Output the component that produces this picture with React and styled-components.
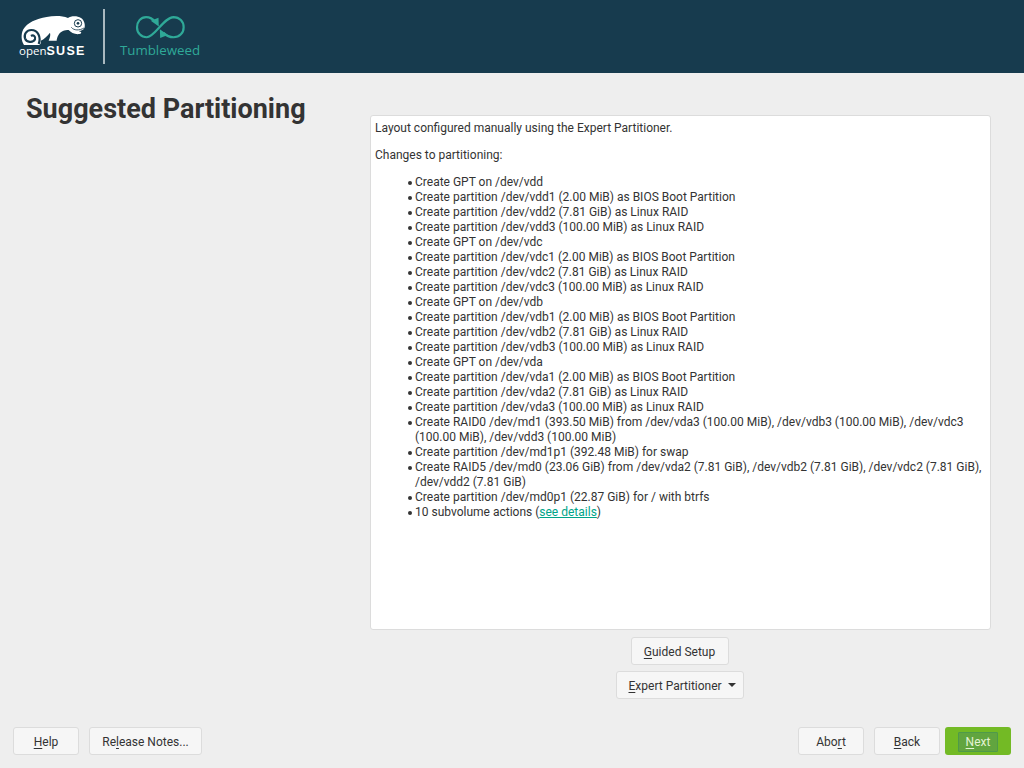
import React from "react";
import styled, { createGlobalStyle } from "styled-components";

const Global = createGlobalStyle`
  html, body { margin: 0; padding: 0; background: #eeeeee; }
  body { font-family: Roboto, "Liberation Sans", sans-serif; font-size: 12px; color: #333; }
`;
const Page = styled.div`
  width: 1024px; height: 768px; display: flex; flex-direction: column; overflow: hidden; background: #eeeeee;
`;
const Header = styled.header`
  height: 73px; background: #173b4e; display: flex; align-items: center; flex: none;
`;
const LogoBlock = styled.div`
  width: 103px; height: 73px; padding: 15px 0 0 18px; box-sizing: border-box; display: flex; flex-direction: column;
`;
const Mascot = styled.svg`
  display: block; width: 70px; height: 30px;
`;
const OpenSuse = styled.div`
  color: #fff; font-family: "Open Sans", sans-serif; font-size: 11.5px; line-height: 11px; margin-left: 1px; white-space: nowrap;
  b { font-family: "Liberation Sans", sans-serif; font-weight: 700; font-size: 12.5px; letter-spacing: 1.3px; }
`;
const Divider = styled.div`
  width: 2px; height: 55px; background: #a9b8bf; flex: none;
`;
const Brand = styled.div`
  align-self: flex-start; padding-top: 15px; margin-left: 14px; width: 82px; display: flex; flex-direction: column; align-items: center;
`;
const Loop = styled.svg`
  display: block; width: 51px; height: 25px;
`;
const BrandName = styled.div`
  color: #2fa998; font-family: "Open Sans", sans-serif; font-size: 13.3px; line-height: 16px; margin-top: 2px; white-space: nowrap;
`;
const Main = styled.main`
  flex: 1; display: flex; min-height: 0;
`;
const Side = styled.div`
  width: 370px; flex: none; padding: 20px 0 0 26px; box-sizing: border-box;
`;
const Title = styled.h1`
  margin: 0; font-size: 27px; line-height: 33px; font-weight: 700; color: #333; white-space: nowrap;
`;
const Content = styled.div`
  width: 621px; padding-top: 42px; display: flex; flex-direction: column; align-items: center;
`;
const Panel = styled.div`
  width: 100%; height: 515px; box-sizing: border-box; background: #fff; border: 1px solid #dcdcdc; border-radius: 3px;
  padding: 5px 4px; line-height: 15px; color: #333;
`;
const Para = styled.p`
  margin: 0 0 12px;
`;
const List = styled.ul`
  margin: 0; padding: 0 0 0 40px; list-style: none;
`;
const Item = styled.li`
  position: relative;
  &::before {
    content: ""; position: absolute; left: -7px; top: 5.5px; width: 4px; height: 4px; border-radius: 50%; background: #333;
  }
`;
const SeeDetails = styled.a`
  color: #00a489; text-decoration: underline;
`;
const Actions = styled.div`
  display: flex; flex-direction: column; align-items: center; gap: 6px; margin-top: 7px; margin-left: -2px;
`;
const Button = styled.button`
  height: 28px; box-sizing: border-box; width: ${p => p.$w}px; padding: 1px 0 0; background: #f6f6f6; border: 1px solid #dcdcdc; border-radius: 3px;
  font: 12px Roboto, sans-serif; color: #333; display: flex; align-items: center; justify-content: center; gap: ${p => p.$gap || 0}px; flex: none;
`;
const ExpertButton = styled(Button)`
  justify-content: flex-start; padding-left: 12px;
`;
const Mn = styled.span`
  text-decoration: underline; text-underline-offset: 2px;
`;
const Caret = styled.span`
  width: 0; height: 0; border-left: 4px solid transparent; border-right: 4px solid transparent; border-top: 4px solid #333; margin-top: -2px;
`;
const Footer = styled.footer`
  flex: none; height: 41px; padding: 0 13px; display: flex; justify-content: space-between; align-items: flex-start; box-sizing: border-box;
`;
const Group = styled.div`
  display: flex; gap: ${p => p.$gap}px;
`;
const NextButton = styled.button`
  height: 28px; width: 66px; box-sizing: border-box; padding: 1px 0 0; background: #73ba25; border: none; border-radius: 3px; margin-left: -5px;
  display: flex; align-items: center; justify-content: center; font: 12px Roboto, sans-serif; color: #e4f3d3;
`;
const NextFocus = styled.span`
  width: 40px; height: 20px; box-sizing: border-box; border: 1px solid #4f9a4a; background: #61a53f; border-radius: 1px; display: flex; align-items: center; justify-content: center;
`;

const items = [
  "Create GPT on /dev/vdd",
  "Create partition /dev/vdd1 (2.00 MiB) as BIOS Boot Partition",
  "Create partition /dev/vdd2 (7.81 GiB) as Linux RAID",
  "Create partition /dev/vdd3 (100.00 MiB) as Linux RAID",
  "Create GPT on /dev/vdc",
  "Create partition /dev/vdc1 (2.00 MiB) as BIOS Boot Partition",
  "Create partition /dev/vdc2 (7.81 GiB) as Linux RAID",
  "Create partition /dev/vdc3 (100.00 MiB) as Linux RAID",
  "Create GPT on /dev/vdb",
  "Create partition /dev/vdb1 (2.00 MiB) as BIOS Boot Partition",
  "Create partition /dev/vdb2 (7.81 GiB) as Linux RAID",
  "Create partition /dev/vdb3 (100.00 MiB) as Linux RAID",
  "Create GPT on /dev/vda",
  "Create partition /dev/vda1 (2.00 MiB) as BIOS Boot Partition",
  "Create partition /dev/vda2 (7.81 GiB) as Linux RAID",
  "Create partition /dev/vda3 (100.00 MiB) as Linux RAID",
  "Create RAID0 /dev/md1 (393.50 MiB) from /dev/vda3 (100.00 MiB), /dev/vdb3 (100.00 MiB), /dev/vdc3 (100.00 MiB), /dev/vdd3 (100.00 MiB)",
  "Create partition /dev/md1p1 (392.48 MiB) for swap",
  "Create RAID5 /dev/md0 (23.06 GiB) from /dev/vda2 (7.81 GiB), /dev/vdb2 (7.81 GiB), /dev/vdc2 (7.81 GiB), /dev/vdd2 (7.81 GiB)",
  "Create partition /dev/md0p1 (22.87 GiB) for / with btrfs",
];

export default function App() {
  return (
    <Page>
      <Global />
      <Header>
        <LogoBlock>
          <Mascot viewBox="54 45 210 90">
            <path fill="#fff" d="M72 135C64 122 62 104 70 88 82 68 108 56 140 51 160 47 185 46 204 54 212 48 232 47 243 54 252 60 256 72 254 82 252 90 244 93 236 93 246 96 246 100 238 102 226 104 212 98 206 90 194 90 182 94 176 104 172 110 170 117 170 122L146 122C150 112 152 106 150 98 142 108 132 118 122 122 124 128 122 132 118 135Z" />
            <path fill="none" stroke="#173b4e" strokeWidth="6.5" d="M116 132C124 112 114 90 94 90 80 90 71 102 75 115 79 127 99 130 105 118 108 110 100 103 93 108" />
            <circle cx="234" cy="70" r="11" fill="none" stroke="#173b4e" strokeWidth="3" />
            <circle cx="234" cy="70" r="4" fill="#173b4e" />
            <path d="M214 82C222 92 238 92 252 84" fill="none" stroke="#173b4e" strokeWidth="2.5" />
          </Mascot>
          <OpenSuse>open<b>SUSE</b></OpenSuse>
        </LogoBlock>
        <Divider />
        <Brand>
          <Loop viewBox="405 45 152 74">
            <path fill="none" stroke="#2fa998" strokeWidth="6.5" d="M466 66C458 56 448 51 438 51 422 51 411 65 411 81 411 98 423 111 440 111 464 111 490 52 520 51 538 51 550 65 550 81 550 98 538 111 520 111 508 111 498 106 490 98" />
            <path fill="#2fa998" d="M452 62L475 53 476 79Z M503 104L480 113 479 87Z" />
          </Loop>
          <BrandName>Tumbleweed</BrandName>
        </Brand>
      </Header>
      <Main>
        <Side>
          <Title>Suggested Partitioning</Title>
        </Side>
        <Content>
          <Panel>
            <Para>Layout configured manually using the Expert Partitioner.</Para>
            <Para>Changes to partitioning:</Para>
            <List>
              {items.map((t) => <Item key={t}>{t}</Item>)}
              <Item>10 subvolume actions (<SeeDetails href="#">see details</SeeDetails>)</Item>
            </List>
          </Panel>
          <Actions>
            <Button $w={98}><span><Mn>G</Mn>uided Setup</span></Button>
            <ExpertButton $w={128} $gap={6}><span><Mn>E</Mn>xpert Partitioner</span><Caret /></ExpertButton>
          </Actions>
        </Content>
      </Main>
      <Footer>
        <Group $gap={10}>
          <Button $w={66}><span><Mn>H</Mn>elp</span></Button>
          <Button $w={113}><span>Re<Mn>l</Mn>ease Notes...</span></Button>
        </Group>
        <Group $gap={10}>
          <Button $w={66}><span>Abo<Mn>r</Mn>t</span></Button>
          <Button $w={66}><span><Mn>B</Mn>ack</span></Button>
          <NextButton><NextFocus><span><Mn>N</Mn>ext</span></NextFocus></NextButton>
        </Group>
      </Footer>
    </Page>
  );
}
